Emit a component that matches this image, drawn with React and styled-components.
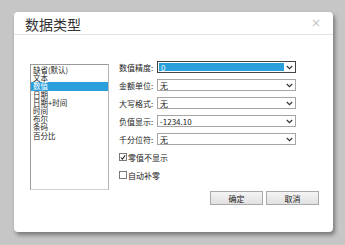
import styled, { createGlobalStyle } from "styled-components";

const Global = createGlobalStyle`
  html, body {
    margin: 0;
    background: #c6c6c6;
    font-family: "Noto Sans CJK SC", "Liberation Sans", sans-serif;
  }
`;

const Page = styled.div`
  width: 345px;
  height: 245px;
  padding: 12px 0 0 14px;
  box-sizing: border-box;
`;

const Dialog = styled.div`
  width: 319px;
  height: 220px;
  background: #fff;
  border-radius: 4px;
  box-shadow: 2px 3px 4px rgba(0, 0, 0, 0.4);
  display: flex;
  flex-direction: column;
`;

const Header = styled.div`
  height: 22px;
  border-bottom: 1px solid #e2e2e2;
  display: flex;
  align-items: center;
  justify-content: space-between;
  padding: 0 12px 0 11px;
`;

const Title = styled.div`
  font-size: 14px;
  color: #333;
  padding-top: 1px;
`;

const Close = styled.div`
  font-size: 12px;
  color: #c4c4c4;
  font-family: "DejaVu Sans", sans-serif;
`;

const Body = styled.div`
  display: flex;
  padding: 29px 0 0 16px;
`;

const List = styled.div`
  width: 77px;
  height: 123px;
  border: 1px solid #9a9a9a;
  border-bottom-color: #cfcfcf;
  border-right-color: #b4b4b4;
  padding-top: 1px;
  box-sizing: content-box;
`;

const Item = styled.div`
  height: 8.2px;
  line-height: 8.2px;
  font-size: 7.5px;
  padding-left: 2px;
  color: ${(p) => (p.$active ? "#fff" : "#222")};
  background: ${(p) => (p.$active ? "#2a9fdb" : "transparent")};
  white-space: nowrap;
`;

const Form = styled.div`
  margin-left: 10px;
  margin-top: -3px;
  display: flex;
  flex-direction: column;
  gap: 6px;
`;

const Row = styled.div`
  display: flex;
  align-items: center;
  height: 12px;
`;

const Label = styled.div`
  width: 38px;
  font-size: 8px;
  color: #222;
  white-space: nowrap;
`;

const Select = styled.div`
  width: 139px;
  height: 12px;
  box-sizing: border-box;
  border: 1px solid ${(p) => (p.$active ? "#444" : "#a5a5a5")};
  display: flex;
  align-items: center;
  font-size: 8px;
  color: #222;
  background: #fff;
`;

const Value = styled.div`
  flex: 1;
  display: flex;
  align-items: center;
  padding-left: 2px;
  margin: ${(p) => (p.$active ? "1px 0 1px 1px" : "0")};
  background: ${(p) => (p.$active ? "#2a9fdb" : "transparent")};
  color: ${(p) => (p.$active ? "#fff" : "#222")};
  box-sizing: border-box;
  height: ${(p) => (p.$active ? "8px" : "100%")};
`;

const Arrow = styled.div`
  width: 11px;
  display: flex;
  justify-content: center;
  align-items: center;
`;

const Check = styled.label`
  display: flex;
  align-items: center;
  gap: 1px;
  height: 12px;
  font-size: 8px;
  color: #222;
`;

const Box = styled.span`
  width: 8px;
  height: 8px;
  box-sizing: border-box;
  border: 1px solid #7a7a7a;
  display: inline-flex;
  align-items: center;
  justify-content: center;
  background: #fff;
`;

const Footer = styled.div`
  display: flex;
  justify-content: flex-end;
  gap: 3px;
  padding: 0 14px 0 0;
  margin-top: 1px;
`;

const Button = styled.div`
  width: 53px;
  height: 14px;
  box-sizing: border-box;
  border: 1px solid #a9a9a9;
  background: linear-gradient(#f4f4f4, #e1e1e1);
  font-size: 8px;
  color: #222;
  display: flex;
  align-items: center;
  justify-content: center;
`;

const Chevron = () => (
  <svg width="7" height="5" viewBox="0 0 7 5">
    <path d="M0.8 1 L3.5 3.7 L6.2 1" fill="none" stroke="#333" strokeWidth="1.2" />
  </svg>
);

const Tick = () => (
  <svg width="7" height="7" viewBox="0 0 7 7">
    <path d="M1 3.5 L2.8 5.5 L6 1" fill="none" stroke="#222" strokeWidth="1.2" />
  </svg>
);

const types = ["缺省(默认)", "文本", "数值", "日期", "日期+时间", "时间", "布尔", "条码", "百分比"];

const fields = [
  { label: "数值精度:", value: "0", active: true },
  { label: "金额单位:", value: "无" },
  { label: "大写格式:", value: "无" },
  { label: "负值显示:", value: "-1234.10" },
  { label: "千分位符:", value: "无" },
];

export default function App() {
  return (
    <Page>
      <Global />
      <Dialog>
        <Header>
          <Title>数据类型</Title>
          <Close>×</Close>
        </Header>
        <Body>
          <List>
            {types.map((t, i) => (
              <Item key={i} $active={t === "数值"}>{t}</Item>
            ))}
          </List>
          <Form>
            {fields.map((f, i) => (
              <Row key={i}>
                <Label>{f.label}</Label>
                <Select $active={f.active}>
                  <Value $active={f.active}>{f.value}</Value>
                  <Arrow><Chevron /></Arrow>
                </Select>
              </Row>
            ))}
            <Check>
              <Box><Tick /></Box>零值不显示
            </Check>
            <Check>
              <Box />自动补零
            </Check>
          </Form>
        </Body>
        <Footer>
          <Button>确定</Button>
          <Button>取消</Button>
        </Footer>
      </Dialog>
    </Page>
  );
}
